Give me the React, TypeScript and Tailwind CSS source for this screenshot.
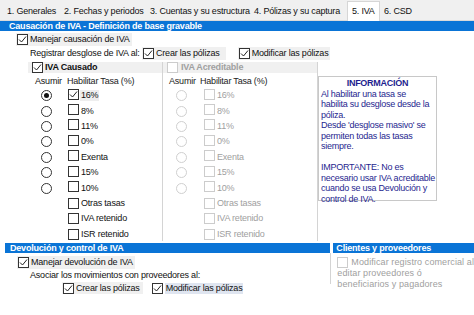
import React from 'react';

const font = { fontFamily: '"Liberation Sans", Arial, sans-serif' };

function Check({ checked = false, disabled = false }: { checked?: boolean; disabled?: boolean }) {
  return (
    <span
      className={`inline-flex w-[11px] h-[11px] shrink-0 items-center justify-center border bg-white ${
        disabled ? 'border-[#cccccc]' : 'border-[#333333]'
      }`}
    >
      {checked && (
        <svg width="9" height="9" viewBox="0 0 9 9">
          <polyline points="1,4.5 3.5,7 8,1.5" fill="none" stroke="#222" strokeWidth="1" />
        </svg>
      )}
    </span>
  );
}

function Radio({ selected = false, disabled = false }: { selected?: boolean; disabled?: boolean }) {
  return (
    <span
      className={`inline-flex w-[11px] h-[11px] shrink-0 items-center justify-center rounded-full border bg-white ${
        disabled ? 'border-[#d0d0d0]' : 'border-[#333333]'
      }`}
    >
      {selected && <span className="w-[5px] h-[5px] rounded-full bg-[#111]" />}
    </span>
  );
}

const tabs = [
  { label: '1. Generales', w: 'w-[57px]' },
  { label: '2. Fechas y periodos', w: 'w-[86px]' },
  { label: '3. Cuentas y su estructura', w: 'w-[104px]' },
  { label: '4. Pólizas y su captura', w: 'w-[97px]' },
  { label: '5. IVA', w: 'w-[33px]', active: true },
  { label: '6. CSD', w: 'w-[34px]' },
];

const rates = ['16%', '8%', '11%', '0%', 'Exenta', '15%', '10%'];
const extras = ['Otras tasas', 'IVA retenido', 'ISR retenido'];

function RateColumn({ disabled }: { disabled?: boolean }) {
  const txt = disabled ? 'text-[#a0a0a0]' : 'text-[#111]';
  return (
    <div className={`flex flex-col ${txt}`}>
      <div className="flex h-[15px] items-end pb-[1px] whitespace-nowrap">
        <span className={disabled ? 'w-[37px] pl-[6px] text-[#222]' : 'w-[39px] pl-[7px]'}>Asumir</span>
        <span className="text-[#222]">Habilitar Tasa (%)</span>
      </div>
      {rates.map((r, i) => (
        <div key={r} className="flex h-[15.4px] items-center pl-[13px]">
          <Radio selected={!disabled && i === 0} disabled={disabled} />
          <span className={disabled ? 'ml-[17px]' : 'ml-[16px]'}>
            <Check checked={!disabled && i === 0} disabled={disabled} />
          </span>
          <span className={`ml-[1px] px-[1px] ${!disabled && i === 0 ? 'bg-[#eeeeee]' : ''}`}>{r}</span>
        </div>
      ))}
      {extras.map((r) => (
        <div key={r} className={`flex h-[15.4px] items-center ${disabled ? 'pl-[41px]' : 'pl-[40px]'}`}>
          <Check disabled={disabled} />
          <span className="ml-[1px] px-[1px]">{r}</span>
        </div>
      ))}
    </div>
  );
}

export default function App() {
  return (
    <div className="w-[474px] h-[315px] overflow-hidden bg-white text-[9px] tracking-[-0.2px] leading-[11px] text-[#111]" style={font}>
      {/* tabs */}
      <div className="flex h-[21px] items-end bg-[#f0f0f0] pl-[3px] border-b border-[#dadada]">
        {tabs.map((t) => (
          <div
            key={t.label}
            className={`${t.w} flex items-center pl-[4px] ${
              t.active ? 'h-[20px] bg-white border border-b-0 border-[#d6d6d6] -mb-[1px]' : 'h-[17px]'
            }`}
          >
            {t.label}
          </div>
        ))}
      </div>

      {/* causación */}
      <div className="h-[10px] bg-[#0a74d6] pl-[9px] font-bold text-white leading-[10px]">
        Causación de IVA - Definición de base gravable
      </div>

      <div className="flex h-[212px] flex-col">
        <div className="flex h-[15px] items-end pl-[16px]">
          <label className="flex h-[13px] items-center gap-[2px] bg-[#f0f0f0] pl-[1px] pr-[2px]">
            <Check checked />
            <span>Manejar causación de IVA</span>
          </label>
        </div>
        <div className="flex h-[14px] items-center pl-[30px]">
          <span className="w-[112px]">Registrar desglose de IVA al:</span>
          <label className="flex h-[13px] items-center gap-[2px] bg-[#f0f0f0] pl-[1px] pr-[6px]">
            <Check checked />
            <span>Crear las pólizas</span>
          </label>
          <label className="ml-[12px] flex h-[13px] items-center gap-[2px] bg-[#f0f0f0] pl-[1px] pr-[2px]">
            <Check checked />
            <span>Modificar las pólizas</span>
          </label>
        </div>

        <div className="flex flex-1 pt-[2px]">
          <div className="w-[162px] pl-[28px]">
            <div className="flex h-[11px] items-center gap-[2px] bg-[#f0f0f0] pl-[4px] font-bold">
              <Check checked />
              <span>IVA Causado</span>
            </div>
            <RateColumn />
          </div>
          <div className="w-[156px] border-x border-[#d4d4d4] h-[179px]">
            <div className="flex h-[11px] items-center gap-[3px] bg-[#f0f0f0] pl-[4px] font-bold text-[#a0a0a0]">
              <Check disabled />
              <span>IVA Acreditable</span>
            </div>
            <RateColumn disabled />
          </div>
          <div className="mt-[14px] h-[125px] w-[119px] border border-[#c8c8c8] px-[2px] pt-[1px] text-[#1f1f8f] leading-[10.5px] tracking-[-0.25px] whitespace-nowrap">
            <div className="text-center font-bold">INFORMACIÓN</div>
            <div>Al habilitar una tasa se</div>
            <div>habilita su desglose desde la</div>
            <div>póliza.</div>
            <div>Desde 'desglose masivo' se</div>
            <div>permiten todas las tasas</div>
            <div>siempre.</div>
            <div className="h-[10.5px]" />
            <div>IMPORTANTE: No es</div>
            <div>necesario usar IVA acreditable</div>
            <div>cuando se usa Devolución y</div>
            <div>control de IVA.</div>
          </div>
        </div>
      </div>

      {/* devolución + clientes */}
      <div className="flex">
        <div className="w-[346px] pl-[5px]">
          <div className="h-[10px] bg-[#0a74d6] pl-[5px] font-bold text-white leading-[10px]">
            Devolución y control de IVA
          </div>
          <div className="flex h-[16px] items-end pl-[12px]">
            <label className="flex h-[13px] items-center gap-[2px] bg-[#f0f0f0] pl-[1px] pr-[2px]">
              <Check checked />
              <span>Manejar devolución de IVA</span>
            </label>
          </div>
          <div className="flex h-[13px] items-center pl-[25px]">Asociar los movimientos con proveedores al:</div>
          <div className="flex h-[12px] items-center pl-[57px]">
            <label className="flex h-[12px] items-center gap-[2px] bg-[#f0f0f0] pl-[1px] pr-[3px]">
              <Check checked />
              <span>Crear las pólizas</span>
            </label>
            <label className="ml-[8px] flex h-[12px] items-center gap-[2px] pl-[1px]">
              <Check checked />
              <span className="bg-[#dfe5f0] px-[1px]">Modificar las pólizas</span>
            </label>
          </div>
        </div>
        <div className="flex-1 pl-[3px]">
          <div className="h-[10px] bg-[#0a74d6] pl-[3px] font-bold text-white leading-[10px] whitespace-nowrap">
            Clientes y proveedores
          </div>
          <div className="-ml-[3px] h-[31px] border-l border-[#d4d4d4] pl-[6px] pt-[4px] text-[#a0a0a0] tracking-[0.1px]">
            <div className="flex items-center gap-[3px] whitespace-nowrap">
              <Check disabled />
              <span>Modificar registro comercial al</span>
            </div>
            <div className="leading-[11px]">editar proveedores ó</div>
            <div className="leading-[11px]">beneficiarios y pagadores</div>
          </div>
        </div>
      </div>
    </div>
  );
}
